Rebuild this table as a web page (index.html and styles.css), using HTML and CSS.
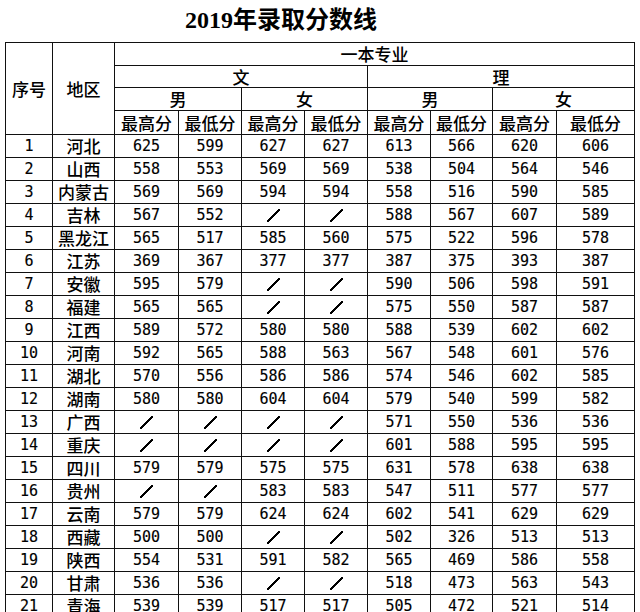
FILE: index.html
```html
<!DOCTYPE html>
<html lang="zh-CN">
<head>
<meta charset="utf-8">
<title>2019年录取分数线</title>
<link rel="stylesheet" href="styles.css">
</head>
<body>
<div class="title"><span class="num">2019</span>年录取分数线</div>
<table class="scores">
<colgroup>
<col class="c-no"><col class="c-area"><col class="c64"><col class="c63"><col class="c63"><col class="c63"><col class="c63"><col class="c62"><col class="c64"><col class="c78">
</colgroup>
<thead>
<tr class="h1"><th rowspan="4">序号</th><th rowspan="4">地区</th><th colspan="8">一本专业</th></tr>
<tr class="h2"><th colspan="4">文</th><th colspan="4">理</th></tr>
<tr class="h3"><th colspan="2">男</th><th colspan="2">女</th><th colspan="2">男</th><th colspan="2">女</th></tr>
<tr class="h4"><th>最高分</th><th>最低分</th><th>最高分</th><th>最低分</th><th>最高分</th><th>最低分</th><th>最高分</th><th>最低分</th></tr>
</thead>
<tbody>
<tr><td>1</td><td class="a">河北</td><td>625</td><td>599</td><td>627</td><td>627</td><td>613</td><td>566</td><td>620</td><td>606</td></tr>
<tr><td>2</td><td class="a">山西</td><td>558</td><td>553</td><td>569</td><td>569</td><td>538</td><td>504</td><td>564</td><td>546</td></tr>
<tr><td>3</td><td class="a">内蒙古</td><td>569</td><td>569</td><td>594</td><td>594</td><td>558</td><td>516</td><td>590</td><td>585</td></tr>
<tr><td>4</td><td class="a">吉林</td><td>567</td><td>552</td><td class="s"></td><td class="s"></td><td>588</td><td>567</td><td>607</td><td>589</td></tr>
<tr><td>5</td><td class="a">黑龙江</td><td>565</td><td>517</td><td>585</td><td>560</td><td>575</td><td>522</td><td>596</td><td>578</td></tr>
<tr><td>6</td><td class="a">江苏</td><td>369</td><td>367</td><td>377</td><td>377</td><td>387</td><td>375</td><td>393</td><td>387</td></tr>
<tr><td>7</td><td class="a">安徽</td><td>595</td><td>579</td><td class="s"></td><td class="s"></td><td>590</td><td>506</td><td>598</td><td>591</td></tr>
<tr><td>8</td><td class="a">福建</td><td>565</td><td>565</td><td class="s"></td><td class="s"></td><td>575</td><td>550</td><td>587</td><td>587</td></tr>
<tr><td>9</td><td class="a">江西</td><td>589</td><td>572</td><td>580</td><td>580</td><td>588</td><td>539</td><td>602</td><td>602</td></tr>
<tr><td>10</td><td class="a">河南</td><td>592</td><td>565</td><td>588</td><td>563</td><td>567</td><td>548</td><td>601</td><td>576</td></tr>
<tr><td>11</td><td class="a">湖北</td><td>570</td><td>556</td><td>586</td><td>586</td><td>574</td><td>546</td><td>602</td><td>585</td></tr>
<tr><td>12</td><td class="a">湖南</td><td>580</td><td>580</td><td>604</td><td>604</td><td>579</td><td>540</td><td>599</td><td>582</td></tr>
<tr><td>13</td><td class="a">广西</td><td class="s"></td><td class="s"></td><td class="s"></td><td class="s"></td><td>571</td><td>550</td><td>536</td><td>536</td></tr>
<tr><td>14</td><td class="a">重庆</td><td class="s"></td><td class="s"></td><td class="s"></td><td class="s"></td><td>601</td><td>588</td><td>595</td><td>595</td></tr>
<tr><td>15</td><td class="a">四川</td><td>579</td><td>579</td><td>575</td><td>575</td><td>631</td><td>578</td><td>638</td><td>638</td></tr>
<tr><td>16</td><td class="a">贵州</td><td class="s"></td><td class="s"></td><td>583</td><td>583</td><td>547</td><td>511</td><td>577</td><td>577</td></tr>
<tr><td>17</td><td class="a">云南</td><td>579</td><td>579</td><td>624</td><td>624</td><td>602</td><td>541</td><td>629</td><td>629</td></tr>
<tr><td>18</td><td class="a">西藏</td><td>500</td><td>500</td><td class="s"></td><td class="s"></td><td>502</td><td>326</td><td>513</td><td>513</td></tr>
<tr><td>19</td><td class="a">陕西</td><td>554</td><td>531</td><td>591</td><td>582</td><td>565</td><td>469</td><td>586</td><td>558</td></tr>
<tr><td>20</td><td class="a">甘肃</td><td>536</td><td>536</td><td class="s"></td><td class="s"></td><td>518</td><td>473</td><td>563</td><td>543</td></tr>
<tr><td>21</td><td class="a">青海</td><td>539</td><td>539</td><td>517</td><td>517</td><td>505</td><td>472</td><td>521</td><td>514</td></tr>
</tbody>
</table>
</body>
</html>
```
FILE: styles.css
```css
html, body {
  margin: 0;
  padding: 0;
  background: #fff;
  color: #000;
}
body {
  overflow: hidden;
}
.title {
  height: 34px;
  padding: 8px 0 0 185px;
  font-family: "Liberation Serif", "Noto Sans CJK SC", serif;
  font-size: 24px;
  font-weight: bold;
  line-height: 24px;
  white-space: nowrap;
}
.title .num {
  font-family: "Liberation Serif", serif;
}
.scores {
  margin-left: 5px;
  width: 630px;
  table-layout: fixed;
  border-collapse: collapse;
  font-family: "Noto Sans CJK SC", sans-serif;
  font-size: 17px;
}
.c-no { width: 47px; }
.c-area { width: 62px; }
.c64 { width: 64px; }
.c63 { width: 63px; }
.c62 { width: 62px; }
.c78 { width: 78px; }
.scores th, .scores td {
  border: 1px solid #111;
  padding: 0;
  text-align: center;
  vertical-align: middle;
  font-weight: normal;
  white-space: nowrap;
}
.scores th {
  line-height: 18px;
  font-weight: 500;
}
.h1 { height: 23px; }
.h2 { height: 22px; }
.h3 { height: 23px; }
.h4 { height: 24px; }
.scores tbody tr { height: 23px; }
.scores td {
  font-family: "DejaVu Sans Mono", monospace;
  font-size: 15px;
  line-height: 18px;
  -webkit-text-stroke: 0.15px #000;
}
.scores td.a {
  font-family: "Noto Sans CJK SC", sans-serif;
  font-size: 17px;
  font-weight: 500;
  -webkit-text-stroke: 0;
}
.scores td.s::before {
  content: "";
  display: inline-block;
  width: 13px;
  height: 13px;
  vertical-align: middle;
  background: linear-gradient(to bottom right,
    transparent calc(50% - 0.8px),
    #000 calc(50% - 0.8px),
    #000 calc(50% + 0.8px),
    transparent calc(50% + 0.8px));
}
```
